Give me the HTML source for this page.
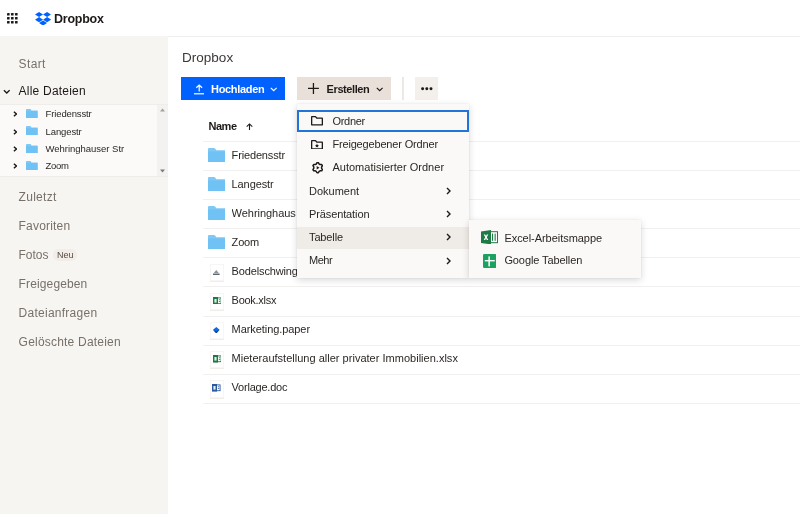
<!DOCTYPE html>
<html lang="de">
<head>
<meta charset="utf-8">
<title>Dropbox</title>
<style>
*{box-sizing:border-box;margin:0;padding:0}
html,body{width:800px;height:514px;overflow:hidden;background:#fff}
body{font-family:"Liberation Sans",sans-serif;color:#1e1919;position:relative}
#wrap{position:absolute;left:0;top:0;width:800px;height:514px;overflow:hidden;will-change:transform}
.abs{position:absolute}
.t{position:absolute;white-space:nowrap}
#topbar{left:0;top:0;width:800px;height:37px;background:#fff;border-bottom:1px solid #f0efed}
#sidebar{left:0;top:36px;width:168px;height:478px;background:#f7f5f2}
.nav{font-size:12px;line-height:16px;color:#777069}
.nav.act{color:#1e1919}
#tree{left:0;top:104px;width:168px;height:73px;background:#fbfaf8;border-top:1px solid #efedea;border-bottom:1px solid #efedea}
#scroll{left:157px;top:105px;width:11px;height:71px;background:#f3f2f0}
.tr{font-size:9.5px;line-height:12px;color:#2b2725}
#title{font-size:13.5px;line-height:16px;color:#3d3937}
.btn{font-weight:bold;font-size:11px;line-height:14px}
#btn1{left:181px;top:77px;width:104px;height:23px;background:#0061fe}
#btn2{left:297px;top:77px;width:94px;height:23px;background:#e9e1d9}
#btn3{left:415px;top:77px;width:23px;height:23px;background:#f3f0ec}
#sep{left:402px;top:77px;width:1.500px;height:23px;background:#ece9e5}
.hline{position:absolute;left:203px;width:597px;height:1px;background:#f1f0ee}
.row{font-size:11px;line-height:14px;color:#2b2725}
.mi{font-size:11px;line-height:14px;color:#2b2725}
.pop{background:#faf9f7;box-shadow:0 2px 7px rgba(30,25,25,.17),0 0 1px rgba(30,25,25,.12)}
.fbox{position:absolute;left:209.500px;width:14px;height:17.500px;background:#fff;border:1px solid #f8f6f4;box-shadow:0 1px 0 #f1eeea}
</style>
</head>
<body>
<div id="wrap">
<div id="topbar" class="abs"></div>
<svg class="abs" style="left:7px;top:13px" width="10.600" height="10.600" viewBox="0 0 10.600 10.600"><g fill="#1e1919"><rect x="0.0" y="0.0" width="2.600" height="2.600" rx=".5"/><rect x="4.0" y="0.0" width="2.600" height="2.600" rx=".5"/><rect x="8.0" y="0.0" width="2.600" height="2.600" rx=".5"/><rect x="0.0" y="4.0" width="2.600" height="2.600" rx=".5"/><rect x="4.0" y="4.0" width="2.600" height="2.600" rx=".5"/><rect x="8.0" y="4.0" width="2.600" height="2.600" rx=".5"/><rect x="0.0" y="8.0" width="2.600" height="2.600" rx=".5"/><rect x="4.0" y="8.0" width="2.600" height="2.600" rx=".5"/><rect x="8.0" y="8.0" width="2.600" height="2.600" rx=".5"/></g></svg>
<svg class="abs" style="left:35.200px;top:11.800px" width="16.100" height="13.700" viewBox="0 0 34 29"><g fill="#0061fe"><path d="M8.500 0 0 5.400l8.500 5.400L17 5.400z"/><path d="M25.500 0 17 5.400l8.500 5.400L34 5.400z"/><path d="M0 16.200l8.500 5.400 8.500-5.400-8.500-5.400z"/><path d="M25.500 10.800 17 16.200l8.500 5.400 8.500-5.400z"/><path d="M8.500 23.400 17 28.800l8.500-5.400L17 18z"/></g></svg>
<div class="t logo" style="left:54px;top:11px;letter-spacing:-0.239px;font-weight:bold;font-size:12.500px;line-height:16px;color:#1e1919">Dropbox</div>
<div id="sidebar" class="abs"></div>
<div class="t nav" style="left:18.6px;top:56px;letter-spacing:0.348px;">Start</div>
<div class="t nav act" style="left:18.6px;top:83px;letter-spacing:0.215px;">Alle Dateien</div>
<div class="t nav" style="left:18.6px;top:189px;letter-spacing:0.287px;">Zuletzt</div>
<div class="t nav" style="left:18.6px;top:218px;letter-spacing:0.182px;">Favoriten</div>
<div class="t nav" style="left:18.6px;top:247px;letter-spacing:-0.053px;">Fotos</div>
<div class="t nav" style="left:18.6px;top:276px;letter-spacing:0.129px;">Freigegeben</div>
<div class="t nav" style="left:18.6px;top:305px;letter-spacing:0.257px;">Dateianfragen</div>
<div class="t nav" style="left:18.6px;top:334px;letter-spacing:0.209px;">Gelöschte Dateien</div>
<svg class="abs" style="left:2.500px;top:88.500px" width="7.500" height="5.500" viewBox="0 0 7.500 5.500"><path d="M.9 1.200 3.750 4 6.600 1.200" fill="none" stroke="#1e1919" stroke-width="1.300"/></svg>
<div id="tree" class="abs"></div>
<div id="scroll" class="abs"></div>
<svg class="abs" style="left:160px;top:108px" width="5" height="4" viewBox="0 0 5 4"><path d="M0 3.500 2.500 .5 5 3.500z" fill="#a3a09c"/></svg>
<svg class="abs" style="left:160px;top:169px" width="5" height="4" viewBox="0 0 5 4"><path d="M0 .5 2.500 3.500 5 .5z" fill="#7d7a76"/></svg>
<div class="abs" style="left:53px;top:249px;width:24px;height:12px;border-radius:6px;background:#f3ece7"></div>
<div class="t badge" style="left:57px;top:249px;letter-spacing:0.048px;font-size:9px;line-height:12px;color:#524d49">Neu</div>
<svg class="abs" style="left:12.600px;top:111.4px" width="4.500" height="6" viewBox="0 0 4.500 6"><path d="M.9 .7 3.400 3 .9 5.300" fill="none" stroke="#1e1919" stroke-width="1.400"/></svg>
<svg class="abs" style="left:26.4px;top:109.10000000000001px" width="11.6" height="9" viewBox="0 0 18 15" preserveAspectRatio="none"><path d="M0 1.200C0 .5.500 0 1.200 0h5c.5 0 .9.200 1.200.6L8.600 2.400H18V15H0z" fill="#80c9f6"/><path d="M0 3.600H18V15H0z" fill="#70c1f4"/></svg>
<div class="t tr" style="left:45.6px;top:108px;letter-spacing:-0.135px;">Friedensstr</div>
<svg class="abs" style="left:12.600px;top:128.7px" width="4.500" height="6" viewBox="0 0 4.500 6"><path d="M.9 .7 3.400 3 .9 5.300" fill="none" stroke="#1e1919" stroke-width="1.400"/></svg>
<svg class="abs" style="left:26.4px;top:126.39999999999999px" width="11.6" height="9" viewBox="0 0 18 15" preserveAspectRatio="none"><path d="M0 1.200C0 .5.500 0 1.200 0h5c.5 0 .9.200 1.200.6L8.600 2.400H18V15H0z" fill="#80c9f6"/><path d="M0 3.600H18V15H0z" fill="#70c1f4"/></svg>
<div class="t tr" style="left:45.6px;top:126px;letter-spacing:-0.115px;">Langestr</div>
<svg class="abs" style="left:12.600px;top:146.0px" width="4.500" height="6" viewBox="0 0 4.500 6"><path d="M.9 .7 3.400 3 .9 5.300" fill="none" stroke="#1e1919" stroke-width="1.400"/></svg>
<svg class="abs" style="left:26.4px;top:143.7px" width="11.6" height="9" viewBox="0 0 18 15" preserveAspectRatio="none"><path d="M0 1.200C0 .5.500 0 1.200 0h5c.5 0 .9.200 1.200.6L8.600 2.400H18V15H0z" fill="#80c9f6"/><path d="M0 3.600H18V15H0z" fill="#70c1f4"/></svg>
<div class="t tr" style="left:45.6px;top:143px;letter-spacing:-0.029px;">Wehringhauser Str</div>
<svg class="abs" style="left:12.600px;top:163.4px" width="4.500" height="6" viewBox="0 0 4.500 6"><path d="M.9 .7 3.400 3 .9 5.300" fill="none" stroke="#1e1919" stroke-width="1.400"/></svg>
<svg class="abs" style="left:26.4px;top:161.1px" width="11.6" height="9" viewBox="0 0 18 15" preserveAspectRatio="none"><path d="M0 1.200C0 .5.500 0 1.200 0h5c.5 0 .9.200 1.200.6L8.600 2.400H18V15H0z" fill="#80c9f6"/><path d="M0 3.600H18V15H0z" fill="#70c1f4"/></svg>
<div class="t tr" style="left:45.6px;top:160px;letter-spacing:-0.323px;">Zoom</div>
<div class="t title" style="left:182px;top:50px;letter-spacing:0.020px;" id="title">Dropbox</div>
<div id="btn1" class="abs"></div><div id="btn2" class="abs"></div><div id="sep" class="abs"></div><div id="btn3" class="abs"></div>
<svg class="abs" style="left:193.600px;top:84.200px" width="10.400" height="10.400" viewBox="0 0 10.400 10.400"><path d="M5.200 1V7.600M2.300 3.800 5.200 1 8.100 3.800" fill="none" stroke="#fff" stroke-width="1.200"/><rect x="0" y="9.200" width="10.400" height="1.200" fill="#fff"/></svg>
<div class="t btn" style="left:211px;top:82px;letter-spacing:-0.314px;color:#fff">Hochladen</div>
<svg class="abs" style="left:270px;top:87px" width="7.400" height="5" viewBox="0 0 7.400 5"><path d="M.8 .8 3.700 3.700 6.600 .8" fill="none" stroke="#fff" stroke-width="1.200"/></svg>
<svg class="abs" style="left:308.300px;top:83.100px" width="10.900" height="10.900" viewBox="0 0 11 11"><path d="M5.500 0V11M0 5.500H11" fill="none" stroke="#1e1919" stroke-width="1.300"/></svg>
<div class="t btn" style="left:326.6px;top:82px;letter-spacing:-0.418px;">Erstellen</div>
<svg class="abs" style="left:375.600px;top:87px" width="7.400" height="5" viewBox="0 0 7.400 5"><path d="M.8 .8 3.700 3.700 6.600 .8" fill="none" stroke="#1e1919" stroke-width="1.200"/></svg>
<svg class="abs" style="left:421px;top:87.300px" width="11.600" height="3.400" viewBox="0 0 11.600 3.400"><circle cx="1.600" cy="1.700" r="1.500" fill="#1e1919"/><circle cx="5.800" cy="1.700" r="1.500" fill="#1e1919"/><circle cx="10" cy="1.700" r="1.500" fill="#1e1919"/></svg>
<div class="t btn" style="left:208.4px;top:119px;letter-spacing:-0.414px;">Name</div>
<svg class="abs" style="left:245.600px;top:122.800px" width="7" height="7" viewBox="0 0 7 7"><path d="M3.500 .9V7M.7 3.600 3.500 .9 6.300 3.600" fill="none" stroke="#1e1919" stroke-width="1.100"/></svg>
<div class="hline" style="top:141px"></div>
<div class="hline" style="top:170px"></div>
<div class="hline" style="top:199px"></div>
<div class="hline" style="top:228px"></div>
<div class="hline" style="top:257px"></div>
<div class="hline" style="top:286px"></div>
<div class="hline" style="top:316px"></div>
<div class="hline" style="top:345px"></div>
<div class="hline" style="top:374px"></div>
<div class="hline" style="top:403px"></div>
<svg class="abs" style="left:208px;top:147.6px" width="17.4" height="14.4" viewBox="0 0 18 15" preserveAspectRatio="none"><path d="M0 1.200C0 .5.500 0 1.200 0h5c.5 0 .9.200 1.200.6L8.600 2.400H18V15H0z" fill="#80c9f6"/><path d="M0 3.600H18V15H0z" fill="#70c1f4"/></svg>
<div class="t row" style="left:231.6px;top:148px;letter-spacing:-0.155px;">Friedensstr</div>
<svg class="abs" style="left:208px;top:176.7px" width="17.4" height="14.4" viewBox="0 0 18 15" preserveAspectRatio="none"><path d="M0 1.200C0 .5.500 0 1.200 0h5c.5 0 .9.200 1.200.6L8.600 2.400H18V15H0z" fill="#80c9f6"/><path d="M0 3.600H18V15H0z" fill="#70c1f4"/></svg>
<div class="t row" style="left:231.6px;top:177px;letter-spacing:-0.106px;">Langestr</div>
<svg class="abs" style="left:208px;top:205.8px" width="17.4" height="14.4" viewBox="0 0 18 15" preserveAspectRatio="none"><path d="M0 1.200C0 .5.500 0 1.200 0h5c.5 0 .9.200 1.200.6L8.600 2.400H18V15H0z" fill="#80c9f6"/><path d="M0 3.600H18V15H0z" fill="#70c1f4"/></svg>
<div class="t row" style="left:231.6px;top:206px;letter-spacing:-0.040px;width:64.600px;overflow:hidden;">Wehringhauser Str</div>
<svg class="abs" style="left:208px;top:234.9px" width="17.4" height="14.4" viewBox="0 0 18 15" preserveAspectRatio="none"><path d="M0 1.200C0 .5.500 0 1.200 0h5c.5 0 .9.200 1.200.6L8.600 2.400H18V15H0z" fill="#80c9f6"/><path d="M0 3.600H18V15H0z" fill="#70c1f4"/></svg>
<div class="t row" style="left:231.6px;top:235px;letter-spacing:-0.185px;">Zoom</div>
<div class="fbox" style="top:263.6px"></div>
<svg class="abs" style="left:213.400px;top:269.8px" width="6.600" height="5" viewBox="0 0 6.600 5"><path d="M3.300 0 5.800 3H.800z" fill="#8a949e"/><rect x="0" y="3.500" width="6.600" height="1.500" fill="#5d6873"/></svg>
<div class="t row" style="left:231.6px;top:264px;letter-spacing:-0.142px;">Bodelschwingstr</div>
<div class="fbox" style="top:292.7px"></div>
<svg class="abs" style="left:212.5px;top:296.9px" width="8.600" height="7.600" viewBox="0 0 8.600 7.600"><rect x="4" y=".9" width="4.100" height="5.800" fill="#fff" stroke="#1d7a45" stroke-width=".9"/><rect x="0" y="0" width="5" height="7.600" fill="#1d7a45"/><rect x="1.400" y="2" width="2.200" height="3.600" fill="#dfeee5"/><rect x="5.800" y="2.400" width="1.400" height=".8" fill="#1d7a45"/><rect x="5.800" y="4.200" width="1.400" height=".8" fill="#1d7a45"/></svg>
<div class="t row" style="left:231.6px;top:293px;letter-spacing:-0.272px;">Book.xlsx</div>
<div class="fbox" style="top:321.8px"></div>
<svg class="abs" style="left:213.400px;top:326.8px" width="6.600" height="6.400" viewBox="0 0 6.600 6.400"><path d="M3.300 0 6.600 2.800 3.300 6.400 0 2.800z" fill="#0d68ea"/><path d="M0 2.800 3.300 4.400 6.600 2.800 3.300 6.400z" fill="#0b3f8f"/></svg>
<div class="t row" style="left:231.6px;top:322px;letter-spacing:-0.073px;">Marketing.paper</div>
<div class="fbox" style="top:350.9px"></div>
<svg class="abs" style="left:212.5px;top:355.1px" width="8.600" height="7.600" viewBox="0 0 8.600 7.600"><rect x="4" y=".9" width="4.100" height="5.800" fill="#fff" stroke="#1d7a45" stroke-width=".9"/><rect x="0" y="0" width="5" height="7.600" fill="#1d7a45"/><rect x="1.400" y="2" width="2.200" height="3.600" fill="#dfeee5"/><rect x="5.800" y="2.400" width="1.400" height=".8" fill="#1d7a45"/><rect x="5.800" y="4.200" width="1.400" height=".8" fill="#1d7a45"/></svg>
<div class="t row" style="left:231.6px;top:351px;letter-spacing:0.015px;">Mieteraufstellung aller privater Immobilien.xlsx</div>
<div class="fbox" style="top:380.0px"></div>
<svg class="abs" style="left:212.3px;top:384.2px" width="8.600" height="7.600" viewBox="0 0 8.600 7.600"><rect x="4" y=".9" width="4.100" height="5.800" fill="#fff" stroke="#2b5aa0" stroke-width=".9"/><rect x="0" y="0" width="5" height="7.600" fill="#2b5aa0"/><rect x="1.400" y="2" width="2.200" height="3.600" fill="#dfeee5"/><rect x="5.800" y="2.400" width="1.400" height=".8" fill="#2b5aa0"/><rect x="5.800" y="4.200" width="1.400" height=".8" fill="#2b5aa0"/></svg>
<div class="t row" style="left:231.6px;top:380px;letter-spacing:-0.220px;">Vorlage.doc</div>
<div class="abs pop" style="left:297px;top:104px;width:172px;height:174px"></div>
<div class="abs" style="left:297px;top:226.500px;width:172px;height:22.500px;background:#efebe6"></div>
<div class="abs" style="left:297.300px;top:109.600px;width:171.700px;height:22.700px;border:2.300px solid #2274d8"></div>
<svg class="abs" style="left:311px;top:116.300px" width="12" height="9.600" viewBox="0 0 12 9.600"><path d="M.65 .9C.65 .75.75.65.9.65H4.500L5.900 2.200H11.100C11.250 2.200 11.350 2.300 11.350 2.450V8.700C11.350 8.850 11.250 8.950 11.100 8.950H.9C.75 8.950.65 8.850.65 8.700z" fill="none" stroke="#1e1919" stroke-width="1.300" stroke-linejoin="round"/></svg>
<svg class="abs" style="left:311px;top:139.500px" width="12" height="9.600" viewBox="0 0 12 9.600"><path d="M.65 .9C.65 .75.75.65.9.65H4.500L5.900 2.200H11.100C11.250 2.200 11.350 2.300 11.350 2.450V8.700C11.350 8.850 11.250 8.950 11.100 8.950H.9C.75 8.950.65 8.850.65 8.700z" fill="none" stroke="#1e1919" stroke-width="1.300" stroke-linejoin="round"/><path d="M6 3.600 6.600 4.900 8 5.100 7 6.100 7.250 7.500 6 6.800 4.750 7.500 5 6.100 4 5.100 5.400 4.900z" fill="#1e1919"/></svg>
<svg class="abs" style="left:311.600px;top:162.300px" width="11.400" height="11.400" viewBox="0 0 11.400 11.400"><path d="M5.03 0.64 L6.37 0.64 L7.19 2.10 L8.07 2.61 L9.75 2.60 L10.41 3.75 L9.57 5.19 L9.57 6.21 L10.41 7.65 L9.75 8.80 L8.07 8.79 L7.19 9.30 L6.37 10.76 L5.03 10.76 L4.21 9.30 L3.33 8.79 L1.65 8.80 L0.99 7.65 L1.83 6.21 L1.83 5.19 L0.99 3.75 L1.65 2.60 L3.33 2.61 L4.21 2.10Z" fill="none" stroke="#1e1919" stroke-width="1.500" stroke-linejoin="round"/><path d="M4.700 3.900 7.500 5.700 4.700 7.500z" fill="#1e1919"/></svg>
<div class="t mi" style="left:332.4px;top:114px;letter-spacing:-0.274px;">Ordner</div>
<div class="t mi" style="left:332.4px;top:137px;letter-spacing:-0.167px;">Freigegebener Ordner</div>
<div class="t mi" style="left:332.4px;top:160px;letter-spacing:0.019px;">Automatisierter Ordner</div>
<div class="t mi" style="left:309px;top:184px;letter-spacing:-0.011px;">Dokument</div>
<svg class="abs" style="left:446.2px;top:186.8px" width="5" height="8" viewBox="0 0 5 8"><path d="M1 1 4 4 1 7" fill="none" stroke="#1e1919" stroke-width="1.4"/></svg>
<div class="t mi" style="left:309px;top:207px;letter-spacing:-0.113px;">Präsentation</div>
<svg class="abs" style="left:446.2px;top:210.1px" width="5" height="8" viewBox="0 0 5 8"><path d="M1 1 4 4 1 7" fill="none" stroke="#1e1919" stroke-width="1.4"/></svg>
<div class="t mi" style="left:309px;top:230px;letter-spacing:-0.123px;">Tabelle</div>
<svg class="abs" style="left:446.2px;top:233.4px" width="5" height="8" viewBox="0 0 5 8"><path d="M1 1 4 4 1 7" fill="none" stroke="#1e1919" stroke-width="1.4"/></svg>
<div class="t mi" style="left:309px;top:253px;letter-spacing:-0.466px;">Mehr</div>
<svg class="abs" style="left:446.2px;top:256.7px" width="5" height="8" viewBox="0 0 5 8"><path d="M1 1 4 4 1 7" fill="none" stroke="#1e1919" stroke-width="1.4"/></svg>
<div class="abs pop" style="left:469px;top:219.700px;width:172px;height:58.800px"></div>
<svg class="abs" style="left:481px;top:229.800px" width="17" height="14.400" viewBox="0 0 17 14.400"><rect x="8" y="1.700" width="8.500" height="11" fill="#fff" stroke="#1f7a45" stroke-width="1"/><rect x="11" y="3.600" width="1.100" height="7.200" fill="#1f7a45"/><rect x="13.600" y="3.600" width="1.100" height="7.200" fill="#1f7a45"/><path d="M0 1.400 10 0V14.400L0 13z" fill="#1f7a45"/><path d="M2.700 4.400H4.200L5 6.100 5.800 4.400H7.300L5.800 7.200 7.300 10H5.800L5 8.300 4.200 10H2.700L4.200 7.200z" fill="#fff"/></svg>
<svg class="abs" style="left:482.600px;top:253.600px" width="13.400" height="14" viewBox="0 0 13.400 14"><rect width="13.400" height="14" rx="1.300" fill="#1ba261"/><rect x="1.800" y="6" width="10" height="1.400" fill="#fff"/><rect x="5.400" y="2.400" width="1.500" height="10" fill="#fff"/></svg>
<div class="t mi" style="left:504.4px;top:231px;letter-spacing:-0.042px;">Excel-Arbeitsmappe</div>
<div class="t mi" style="left:504.4px;top:253px;letter-spacing:-0.099px;">Google Tabellen</div>
</div>
</body>
</html>
